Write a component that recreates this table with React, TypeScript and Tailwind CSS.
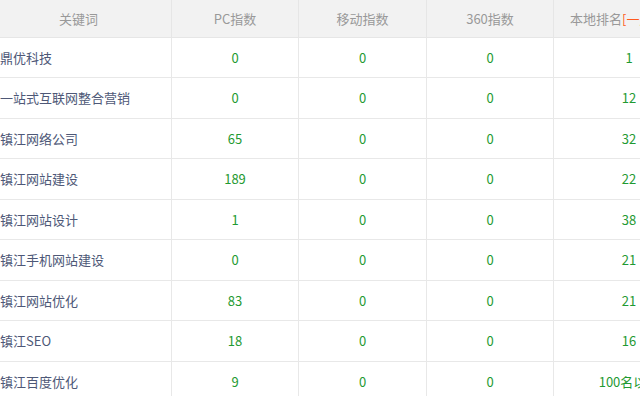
import React from "react";

const rows: [string, string, string, string, string][] = [
  ["鼎优科技", "0", "0", "0", "1"],
  ["一站式互联网整合营销", "0", "0", "0", "12"],
  ["镇江网络公司", "65", "0", "0", "32"],
  ["镇江网站建设", "189", "0", "0", "22"],
  ["镇江网站设计", "1", "0", "0", "38"],
  ["镇江手机网站建设", "0", "0", "0", "21"],
  ["镇江网站优化", "83", "0", "0", "21"],
  ["镇江SEO", "18", "0", "0", "16"],
  ["镇江百度优化", "9", "0", "0", "100名以外"],
];

const font = { fontFamily: '"Noto Sans CJK SC", "Microsoft YaHei", sans-serif' };

export default function App() {
  return (
    <div className="w-[640px] h-[396px] overflow-hidden bg-white" style={font}>
      <div className="ml-[-14px] w-[718px] text-[13px]">
        <div className="flex h-[37.5px] bg-[#f2f2f2] border-b border-[#e6e6e6] text-[#999999]">
          <div className="w-[186px] border-r border-[#e6e6e6] flex items-center justify-center">关键词</div>
          <div className="w-[127px] border-r border-[#e6e6e6] flex items-center justify-center">PC指数</div>
          <div className="w-[128px] border-r border-[#e6e6e6] flex items-center justify-center">移动指数</div>
          <div className="w-[127px] border-r border-[#e6e6e6] flex items-center justify-center">360指数</div>
          <div className="w-[150px] flex items-center pl-[16px]">
            本地排名<span className="text-[#ff5a1f]">[一周]</span>
          </div>
        </div>
        {rows.map((r, i) => (
          <div key={i} className="flex h-[40.5px] border-b border-[#e8e8e8]">
            <div className="w-[186px] border-r border-[#e8e8e8] flex items-center pl-[14px] text-[#4e5877]">{r[0]}</div>
            <div className="w-[127px] border-r border-[#e8e8e8] flex items-center justify-center text-[#1f9a32]">{r[1]}</div>
            <div className="w-[128px] border-r border-[#e8e8e8] flex items-center justify-center text-[#1f9a32]">{r[2]}</div>
            <div className="w-[127px] border-r border-[#e8e8e8] flex items-center justify-center text-[#1f9a32]">{r[3]}</div>
            <div className="w-[150px] flex items-center justify-center text-[#1f9a32]">{r[4]}</div>
          </div>
        ))}
      </div>
    </div>
  );
}
